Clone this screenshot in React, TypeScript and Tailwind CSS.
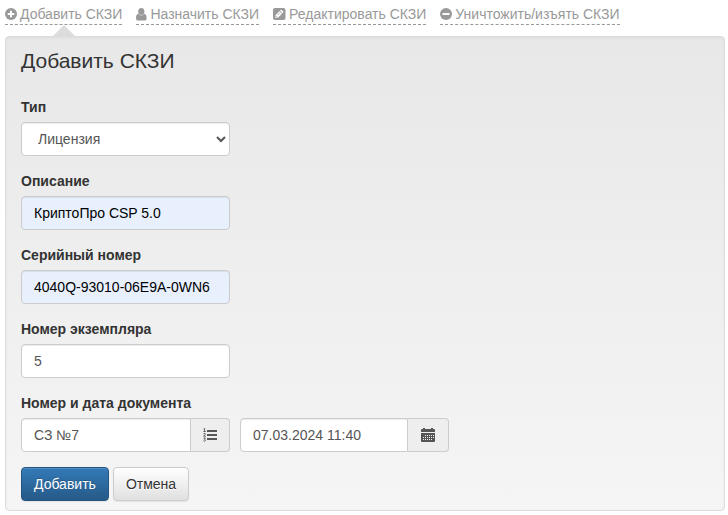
import React from 'react';

const inputClass =
  'block h-[34px] w-full min-w-0 rounded border border-[#ccc] px-3 text-sm shadow-[inset_0_1px_1px_rgba(0,0,0,0.075)] outline-none';
const addonClass =
  'flex h-[34px] shrink-0 items-center justify-center rounded-r border border-l-0 border-[#ccc] bg-[#eee] text-[#555]';
const buttonClass = 'h-[34px] rounded border px-3 text-sm';

const PlusIcon = () => (
  <svg width="12" height="12" viewBox="0 0 12 12" aria-hidden="true">
    <circle cx="6" cy="6" r="6" fill="currentColor" />
    <path d="M6 2.7V9.3M2.7 6H9.3" stroke="#fff" strokeWidth="1.9" />
  </svg>
);

const MinusIcon = () => (
  <svg width="12" height="12" viewBox="0 0 12 12" aria-hidden="true">
    <circle cx="6" cy="6" r="6" fill="currentColor" />
    <path d="M2.5 6H9.5" stroke="#fff" strokeWidth="1.9" />
  </svg>
);

const UserIcon = () => (
  <svg width="11" height="13" viewBox="0 0 11 13" fill="currentColor" aria-hidden="true">
    <ellipse cx="5.3" cy="3.6" rx="3.1" ry="3.5" />
    <path d="M2.3 5.8Q3.6 7.6 5.3 7.6T8.3 5.8C10 6 10.6 8 10.6 10.3C10.6 11.8 9.8 12.6 8.6 12.6H2C.8 12.6 0 11.8 0 10.3C0 8 .6 6 2.3 5.8Z" />
  </svg>
);

const EditIcon = () => (
  <svg width="13" height="12" viewBox="0 0 13 12" aria-hidden="true">
    <rect width="12.5" height="12" rx="2" fill="currentColor" />
    <path d="M2.4 7.3L6.5 3.2L9 5.7L4.9 9.8H2.4ZM7 2.7L7.7 2Q8.2 1.6 8.7 2L10.2 3.5Q10.6 4 10.2 4.5L9.5 5.2Z" fill="#fff" />
    <path d="M3.3 7.8V8.9H4.4M4.7 7L6.8 4.9" stroke="currentColor" strokeWidth=".7" fill="none" />
  </svg>
);

const ListIcon = () => (
  <svg width="14" height="14" viewBox="0 0 14 14" fill="none" stroke="currentColor" aria-hidden="true">
    <path d="M4 3H14M4 7H14M4 11H14" strokeWidth="2" />
    <path d="M.6 1L1.6 .4V3.4M.4 3.5H2.8M.5 5.6Q2.6 4.8 2.4 6.2L.6 8.2H2.8M.5 10H2.4L1.4 11.3Q2.8 11.5 2.3 12.8Q1.5 13.6.4 13" strokeWidth=".9" />
  </svg>
);

const CalendarIcon = () => (
  <svg width="14" height="14" viewBox="0 0 14 14" fill="currentColor" aria-hidden="true">
    <path d="M0 4V2Q0 1 1 1H2V0H4V1H10V0H12V1H13Q14 1 14 2V4Z" />
    <path fillRule="evenodd" d="M0 5H14V13Q14 14 13 14H1Q0 14 0 13ZM4 7V8H5V7ZM6 7V8H7V7ZM8 7V8H9V7ZM10 7V8H11V7ZM12 7V8H13V7ZM2 9V10H3V9ZM4 9V10H5V9ZM6 9V10H7V9ZM8 9V10H9V9ZM10 9V10H11V9ZM12 9V10H13V9ZM2 11V12H3V11ZM4 11V12H5V11ZM6 11V12H7V11ZM8 11V12H9V11ZM10 11V12H11V11Z" />
  </svg>
);

const actions = [
  { label: 'Добавить СКЗИ', icon: <PlusIcon /> },
  { label: 'Назначить СКЗИ', icon: <UserIcon /> },
  { label: 'Редактировать СКЗИ', icon: <EditIcon /> },
  { label: 'Уничтожить/изъять СКЗИ', icon: <MinusIcon /> },
];

const Field: React.FC<{ id: string; label: string; children: React.ReactNode }> = ({ id, label, children }) => (
  <div className="mb-[15px] w-[209px]">
    <label htmlFor={id} className="mb-[5px] block text-sm font-bold">
      {label}
    </label>
    {children}
  </div>
);

const App: React.FC = () => {
  return (
    <div className="bg-white pt-1 pr-[3px] pl-[5px] font-['Liberation_Sans',Arial,sans-serif] text-sm text-[#333]">
      <nav className="flex flex-wrap gap-x-[14px]">
        {actions.map((action, index) => (
          <a
            key={action.label}
            href="#"
            className="relative flex h-[21px] items-center gap-[3px] border-b border-dashed border-[#999] whitespace-nowrap text-[#999]"
          >
            {action.icon}
            {action.label}
            {index === 0 && (
              <span className="absolute top-[21px] left-1/2 -ml-[11px] border-x-[11px] border-b-[11px] border-x-transparent border-b-[#dcdcdc]" />
            )}
          </a>
        ))}
      </nav>

      <main className="mt-[11px] rounded border border-[#dcdcdc] bg-linear-to-b from-[#e8e8e8] to-[#f5f5f5] px-[15px] pb-[9px] shadow-[inset_0_1px_3px_rgba(0,0,0,0.05)]">
        <h1 className="mb-6 pt-3 text-[21px] leading-6">Добавить СКЗИ</h1>
        <form onSubmit={(e) => e.preventDefault()}>
          <Field id="type" label="Тип">
            <select id="type" defaultValue="license" className={`${inputClass} bg-white text-[#555]`}>
              <option value="license">Лицензия</option>
            </select>
          </Field>
          <Field id="description" label="Описание">
            <input id="description" defaultValue="КриптоПро CSP 5.0" className={`${inputClass} bg-[#e8f0fe] text-black`} />
          </Field>
          <Field id="serial" label="Серийный номер">
            <input id="serial" defaultValue="4040Q-93010-06E9A-0WN6" className={`${inputClass} bg-[#e8f0fe] text-black`} />
          </Field>
          <Field id="copy" label="Номер экземпляра">
            <input id="copy" defaultValue="5" className={`${inputClass} bg-white text-[#555]`} />
          </Field>

          <label htmlFor="document" className="mb-[5px] block text-sm font-bold">
            Номер и дата документа
          </label>
          <div className="mb-[15px] flex flex-wrap gap-[10px]">
            <div className="flex w-[209px]">
              <input id="document" defaultValue="СЗ №7" className={`${inputClass} rounded-r-none bg-white text-[#555]`} />
              <button type="button" aria-label="Выбрать номер" className={`${addonClass} w-[39px]`}>
                <ListIcon />
              </button>
            </div>
            <div className="flex w-[209px]">
              <input aria-label="Дата документа" defaultValue="07.03.2024 11:40" className={`${inputClass} rounded-r-none bg-white text-[#555]`} />
              <button type="button" aria-label="Выбрать дату" className={`${addonClass} w-[41px]`}>
                <CalendarIcon />
              </button>
            </div>
          </div>

          <div className="flex gap-1">
            <button
              type="submit"
              className={`${buttonClass} border-[#245580] bg-linear-to-b from-[#337ab7] to-[#265a88] text-white shadow-[inset_0_1px_0_rgba(255,255,255,0.15),0_1px_1px_rgba(0,0,0,0.075)] text-shadow-[0_-1px_0_rgba(0,0,0,0.2)]`}
            >
              Добавить
            </button>
            <button
              type="button"
              className={`${buttonClass} border-[#ccc] bg-linear-to-b from-white to-[#e0e0e0] shadow-[inset_0_1px_0_rgba(255,255,255,0.15),0_1px_1px_rgba(0,0,0,0.075)] text-shadow-[0_1px_0_#fff]`}
            >
              Отмена
            </button>
          </div>
        </form>
      </main>
    </div>
  );
};

export default App;
